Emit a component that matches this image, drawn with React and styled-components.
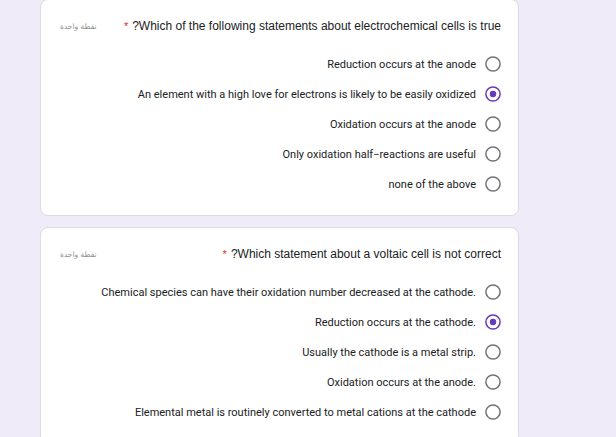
import React from "react";
import styled, { createGlobalStyle } from "styled-components";

const Global = createGlobalStyle`
  html, body { margin: 0; padding: 0; background: #f0ebf8; }
  body { font-family: Roboto, "Liberation Sans", Arial, sans-serif; overflow: hidden; }
`;

const Page = styled.div`
  width: 616px;
  height: 437px;
  overflow: hidden;
  padding-left: 40px;
  box-sizing: border-box;
  display: flex;
  flex-direction: column;
  gap: 11px;
`;

const Card = styled.section`
  width: 479px;
  box-sizing: border-box;
  background: #fff;
  border: 1px solid #dadce0;
  border-radius: 8px;
  padding: 18px 17px 16px 19px;
  margin-top: ${(p) => (p.$first ? "-1px" : "0")};
  flex-shrink: 0;
`;

const Header = styled.div`
  height: 16px;
  display: flex;
  align-items: center;
  justify-content: space-between;
`;

const Points = styled.span`
  font-family: "DejaVu Sans", "Noto Sans", sans-serif;
  font-size: 7.5px;
  color: #8a8d91;
  direction: rtl;
`;

const Title = styled.div`
  font-family: "Liberation Sans", Arial, sans-serif;
  font-size: 12px;
  color: #202124;
  display: flex;
  align-items: center;
  gap: 4px;
  white-space: nowrap;
`;

const Star = styled.span`
  color: #d93025;
  font-size: 11px;
`;

const Options = styled.div`
  margin-top: 15px;
  display: flex;
  flex-direction: column;
`;

const Row = styled.label`
  height: 30px;
  display: flex;
  align-items: center;
  justify-content: flex-end;
  gap: 9px;
`;

const OptionText = styled.span`
  font-family: Roboto, "Liberation Sans", sans-serif;
  font-size: 11px;
  color: #202124;
  white-space: nowrap;
`;

const RadioSvg = styled.svg`
  width: 16px;
  height: 16px;
  flex-shrink: 0;
  display: block;
`;

function Radio({ checked }) {
  const c = checked ? "#673ab7" : "#6f7378";
  return (
    <RadioSvg viewBox="0 0 16 16">
      <circle cx="8" cy="8" r="7.1" fill="none" stroke={c} strokeWidth="1.5" />
      {checked && <circle cx="8" cy="8" r="3.2" fill={c} />}
    </RadioSvg>
  );
}

const questions = [
  {
    title: "?Which of the following statements about electrochemical cells is true",
    options: [
      ["Reduction occurs at the anode", false],
      ["An element with a high love for electrons is likely to be easily oxidized", true],
      ["Oxidation occurs at the anode", false],
      ["Only oxidation half\u2212reactions are useful", false],
      ["none of the above", false],
    ],
  },
  {
    title: "?Which statement about a voltaic cell is not correct",
    options: [
      ["Chemical species can have their oxidation number decreased at the cathode.", false],
      ["Reduction occurs at the cathode.", true],
      ["Usually the cathode is a metal strip.", false],
      ["Oxidation occurs at the anode.", false],
      ["Elemental metal is routinely converted to metal cations at the cathode", false],
    ],
  },
];

export default function App() {
  return (
    <>
      <Global />
      <Page>
        {questions.map((q, i) => (
          <Card key={i} $first={i === 0}>
            <Header>
              <Points>نقطة واحدة</Points>
              <Title>
                <Star>*</Star>
                <span>{q.title}</span>
              </Title>
            </Header>
            <Options>
              {q.options.map(([t, c], j) => (
                <Row key={j}>
                  <OptionText>{t}</OptionText>
                  <Radio checked={c} />
                </Row>
              ))}
            </Options>
          </Card>
        ))}
      </Page>
    </>
  );
}
